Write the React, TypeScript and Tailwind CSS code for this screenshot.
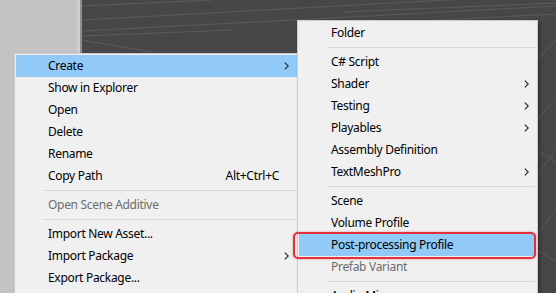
import React from "react";

type Item =
  | { kind: "sep" }
  | { kind: "item"; label: string; shortcut?: string; sub?: boolean; disabled?: boolean; active?: boolean };

const mainItems: Item[] = [
  { kind: "item", label: "Create", sub: true, active: true },
  { kind: "item", label: "Show in Explorer" },
  { kind: "item", label: "Open" },
  { kind: "item", label: "Delete" },
  { kind: "item", label: "Rename" },
  { kind: "item", label: "Copy Path", shortcut: "Alt+Ctrl+C" },
  { kind: "sep" },
  { kind: "item", label: "Open Scene Additive", disabled: true },
  { kind: "sep" },
  { kind: "item", label: "Import New Asset..." },
  { kind: "item", label: "Import Package", sub: true },
  { kind: "item", label: "Export Package..." },
];

const createItems: Item[] = [
  { kind: "item", label: "Folder" },
  { kind: "sep" },
  { kind: "item", label: "C# Script" },
  { kind: "item", label: "Shader", sub: true },
  { kind: "item", label: "Testing", sub: true },
  { kind: "item", label: "Playables", sub: true },
  { kind: "item", label: "Assembly Definition" },
  { kind: "item", label: "TextMeshPro", sub: true },
  { kind: "sep" },
  { kind: "item", label: "Scene" },
  { kind: "item", label: "Volume Profile" },
  { kind: "item", label: "Post-processing Profile", active: true },
  { kind: "item", label: "Prefab Variant", disabled: true },
  { kind: "sep" },
  { kind: "item", label: "Audio Mixer" },
];

function Chevron() {
  return (
    <svg width="5" height="8" viewBox="0 0 5 8" className="block">
      <path d="M0.8 0.6 L4.2 4 L0.8 7.4" fill="none" stroke="#2b2b2b" strokeWidth="1.2" />
    </svg>
  );
}

function Menu({ items, arrowCol }: { items: Item[]; arrowCol: string }) {
  return (
    <div className="flex flex-col">
      {items.map((it, i) =>
        it.kind === "sep" ? (
          <div key={i} className="h-[7px] flex items-center ml-[28px] mr-[1px]">
            <div className="h-px w-full bg-[#d7d7d7]" />
          </div>
        ) : (
          <div
            key={i}
            className={`h-[22px] flex items-center pl-[32px] ${it.active ? "bg-[#91c9f7]" : ""} ${
              it.disabled ? "text-[#6d6d6d]" : "text-[#000000]"
            }`}
          >
            <span className="flex-1 whitespace-nowrap">{it.label}</span>
            {it.shortcut && <span className="whitespace-nowrap">{it.shortcut}</span>}
            <span className={`${arrowCol} flex items-center`}>{it.sub && <Chevron />}</span>
          </div>
        )
      )}
    </div>
  );
}

function SceneGrid() {
  return (
    <svg className="absolute inset-0" width="474" height="293" viewBox="0 0 474 293">
      <g stroke="#5b5b5b" strokeWidth="1" fill="none">
        <path d="M0 20 L220 8 L474 -6" />
        <path d="M0 31 L230 19 L474 6" />
        <path d="M0 40 L70 52" />
        <path d="M0 36 L150 30" />
        <path d="M260 12 L474 3" />
        <path d="M320 22 L474 14" />
        <path d="M0 6 L130 0" />
        <path d="M455 60 L474 40" />
        <path d="M455 120 L474 98" />
        <path d="M455 175 L474 150" />
        <path d="M455 235 L474 210" />
        <path d="M455 150 L474 162" />
        <path d="M455 250 L474 262" />
      </g>
    </svg>
  );
}

export default function App() {
  return (
    <div
      className="relative w-[556px] h-[293px] overflow-hidden flex text-[12px] leading-none tracking-[-0.3px]"
      style={{ fontFamily: '"Noto Sans", "Open Sans", Arial, sans-serif' }}
    >
      <div className="w-[77px] h-full bg-[#c3c3c3]" />
      <div className="w-[3px] h-full bg-[#cfcfcf]" />
      <div className="w-[2px] h-full bg-[#8d8d8d]" />
      <div className="relative flex-1 h-full bg-[#464646]">
        <SceneGrid />
      </div>

      <div className="absolute left-[14px] top-[53px] w-[300px] h-[260px] bg-[#f0f0f0] border border-[#cccccc] p-px shadow-[2px_2px_3px_rgba(0,0,0,0.25)]">
        <Menu items={mainItems} arrowCol="w-[33px] pl-[5px]" />
      </div>

      <div className="absolute left-[297px] top-[20px] w-[241px] h-[290px] bg-[#f0f0f0] border border-[#cccccc] p-px shadow-[2px_2px_3px_rgba(0,0,0,0.3)]">
        <Menu items={createItems} arrowCol="w-[21px] pl-[9px]" />
      </div>

      <div className="absolute left-[293px] top-[232px] w-[243px] h-[27px] border-2 border-[#e0313b] rounded-[5px] shadow-[0_0_2px_rgba(224,49,59,0.6)]" />
    </div>
  );
}
